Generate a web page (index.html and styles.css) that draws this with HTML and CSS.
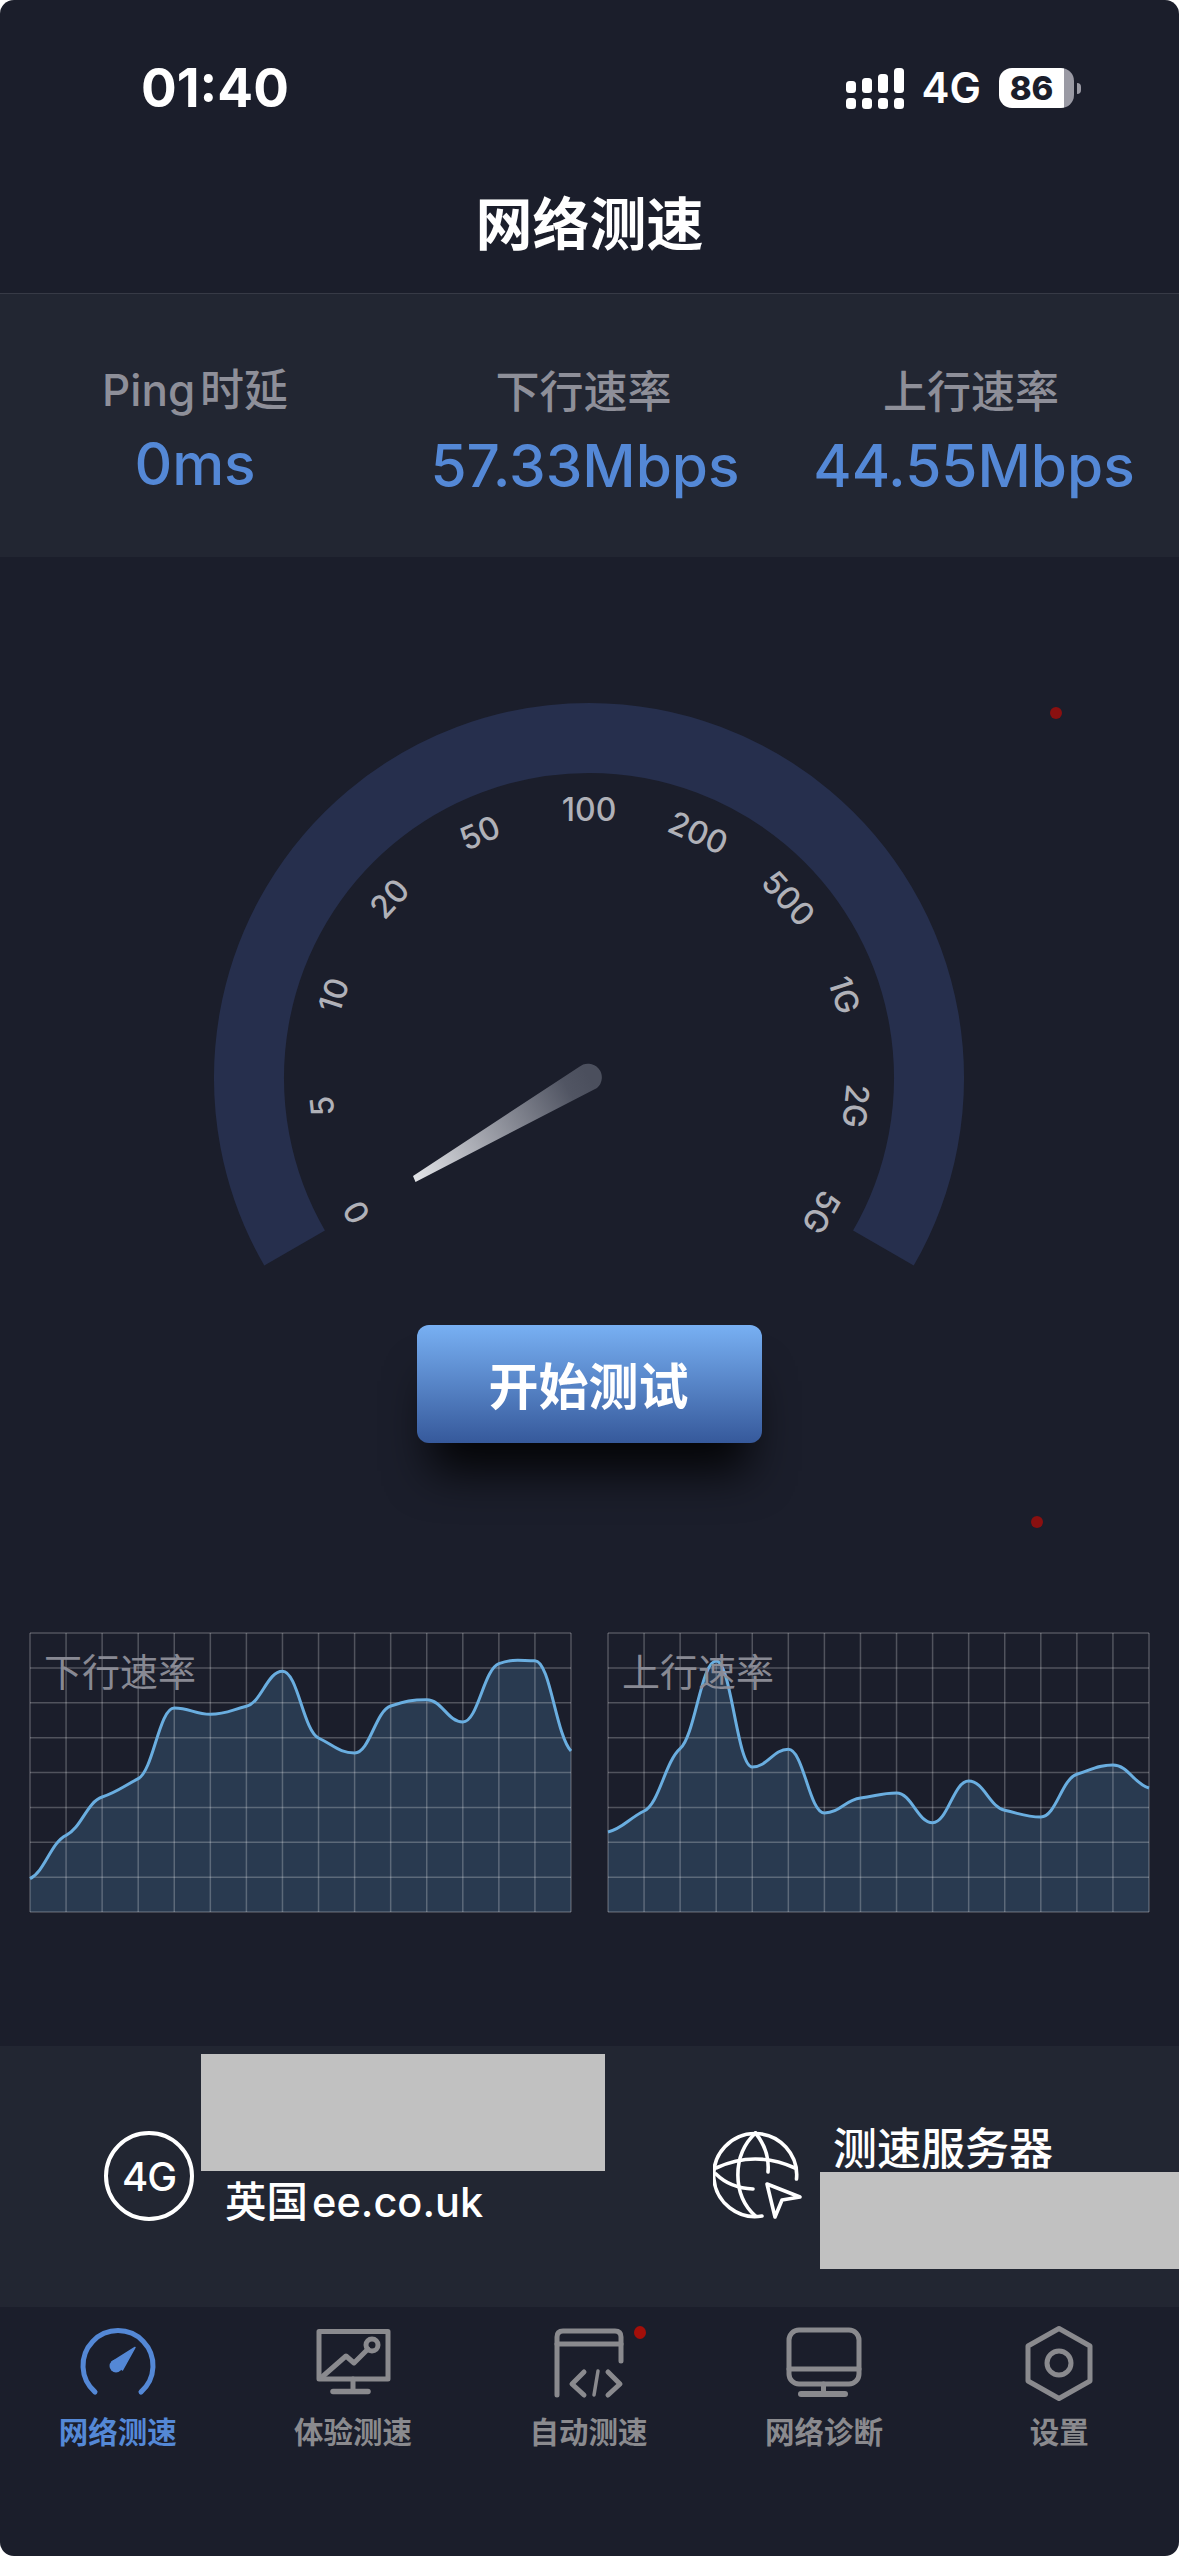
FILE: index.html
```html
<!DOCTYPE html>
<html lang="zh-CN">
<head>
<meta charset="utf-8">
<title>网络测速</title>
<link rel="stylesheet" href="styles.css">
</head>
<body>
<div class="screen">
  <header class="header">
    <div class="status">
      <span class="time">01:40</span>
      <div class="status-right">
        <svg class="signal" viewBox="0 0 58 41" width="58" height="41">
          <g fill="#fff">
            <rect x="0" y="13" width="10" height="12" rx="3.5"/><rect x="16" y="10" width="10" height="15" rx="3.5"/><rect x="32" y="6" width="10" height="19" rx="3.5"/><rect x="48" y="0" width="10" height="25" rx="3.5"/>
            <rect x="0" y="30" width="10" height="11" rx="3.5"/><rect x="16" y="30" width="10" height="11" rx="3.5"/><rect x="32" y="30" width="10" height="11" rx="3.5"/><rect x="48" y="30" width="10" height="11" rx="3.5"/>
          </g>
        </svg>
        <span class="net">4G</span>
        <div class="battery"><span>86</span></div>
        <div class="battery-cap"></div>
      </div>
    </div>
    <h1 class="title">网络测速</h1>
  </header>

  <section class="stats">
    <div class="stat stat-ping"><div class="stat-label">Ping 时延</div><div class="stat-value">0ms</div></div>
    <div class="stat stat-down"><div class="stat-label">下行速率</div><div class="stat-value">57.33Mbps</div></div>
    <div class="stat stat-up"><div class="stat-label">上行速率</div><div class="stat-value">44.55Mbps</div></div>
  </section>

  <main class="main">
    <span class="marker marker-a"></span>
    <span class="marker marker-b"></span>
    <svg class="gauge" viewBox="0 680 1179 600" width="1179" height="600">
      <defs>
        <linearGradient id="needle" gradientUnits="userSpaceOnUse" x1="589" y1="1077" x2="414" y2="1179">
          <stop offset="0" stop-color="#4b4f5d"/>
          <stop offset="0.12" stop-color="#515563"/>
          <stop offset="1" stop-color="#e3e4e8"/>
        </linearGradient>
      </defs>
      <path class="gauge-ring" d="M294.6 1248 A340 340 0 1 1 883.4 1248"/>
      <g class="gauge-labels">
        <text x="589" y="821" transform="rotate(-120 589 1078)">0</text>
        <text x="589" y="821" transform="rotate(-96 589 1078)">5</text>
        <text x="589" y="821" transform="rotate(-72 589 1078)">10</text>
        <text x="589" y="821" transform="rotate(-48 589 1078)">20</text>
        <text x="589" y="821" transform="rotate(-24 589 1078)">50</text>
        <text x="589" y="821">100</text>
        <text x="589" y="821" transform="rotate(24 589 1078)">200</text>
        <text x="589" y="821" transform="rotate(48 589 1078)">500</text>
        <text x="589" y="821" transform="rotate(72 589 1078)">1G</text>
        <text x="589" y="821" transform="rotate(96 589 1078)">2G</text>
        <text x="589" y="821" transform="rotate(120 589 1078)">5G</text>
      </g>
      <path fill="url(#needle)" d="M413 1176 L579 1067 A13 13 0 0 1 597 1088 L415.5 1182 Z"/>
    </svg>
    <button class="start" type="button">开始测试</button>
    <div class="charts">
      <div class="chart">
        <svg class="chart-svg" viewBox="0 0 541 279" data-points="805 675 560 505 293 312 288 183 383 428 287 268 335 160 151 422"></svg>
        <span class="chart-label">下行速率</span>
      </div>
      <div class="chart">
        <svg class="chart-svg" viewBox="0 0 541 279" data-points="665 602 415 152 470 417 608 563 548 637 512 600 620 492 464 533"></svg>
        <span class="chart-label">上行速率</span>
      </div>
    </div>
  </main>

  <section class="info">
    <div class="info-left">
      <svg class="info-icon" viewBox="0 0 90 90" width="90" height="90">
        <ellipse cx="45" cy="45" rx="43" ry="43" fill="none" stroke="#fff" stroke-width="4"/>
        <text class="badge-4g" x="45" y="60">4G</text>
      </svg>
      <div class="info-col-left">
        <div class="redact redact-a"></div>
        <div class="isp">英国 ee.co.uk</div>
      </div>
    </div>
    <div class="info-right">
      <svg class="info-icon" viewBox="713 2131 90 90" width="90" height="90">
        <g fill="none" stroke="#fff" stroke-width="3.6" stroke-linecap="round" stroke-linejoin="round">
          <path d="M796.5 2179 A41.5 41.5 0 1 0 762 2216"/>
          <path d="M716 2168 Q755 2150 795 2168"/>
          <path d="M716 2174 Q730 2188 753 2189"/>
          <path d="M755.5 2133 C732 2155 732 2195 755.5 2216"/>
          <path d="M755.5 2133 C766 2146 769 2160 768 2172"/>
          <path d="M767 2184 L800 2197 L782 2200 L775 2217 Z"/>
        </g>
      </svg>
      <div class="info-col-right">
        <div class="server">测速服务器</div>
        <div class="redact redact-b"></div>
      </div>
    </div>
  </section>

  <nav class="nav">
    <div class="nav-item nav-active">
      <svg class="nav-icon" viewBox="73 2324 90 80" width="90" height="80">
        <path d="M95 2392 A35 35 0 1 1 141 2392" fill="none" stroke="#5488d6" stroke-width="5" stroke-linecap="round"/>
        <path d="M112 2362 L135 2347.500 L122.500 2370 Z" fill="#5488d6" stroke="#5488d6" stroke-width="1.500" stroke-linejoin="round"/>
        <circle cx="116" cy="2366" r="6.500" fill="#5488d6"/>
      </svg>
      <span class="nav-label">网络测速</span>
    </div>
    <div class="nav-item">
      <svg class="nav-icon" viewBox="308 2324 90 80" width="90" height="80">
        <g fill="none" stroke="#8a8a8e" stroke-width="5" stroke-linejoin="round" stroke-linecap="round">
          <path d="M319 2379 V2331.500 H388 V2379 H319"/>
          <path d="M353 2379 V2391"/>
          <path d="M333 2391.500 H368" stroke-width="5.500"/>
          <path d="M322 2377 L346 2356 L354 2363 L368 2349"/>
          <circle cx="372" cy="2345" r="6"/>
        </g>
      </svg>
      <span class="nav-label">体验测速</span>
    </div>
    <div class="nav-item">
      <span class="badge"></span>
      <svg class="nav-icon" viewBox="544 2324 90 80" width="90" height="80">
        <g fill="none" stroke="#8a8a8e" stroke-width="5" stroke-linejoin="round" stroke-linecap="round">
          <path d="M557 2395 V2337 Q557 2331 563 2331 H615 Q621 2331 621 2337 V2361"/>
          <path d="M557 2344 H621"/>
          <path d="M584 2372 L572 2384 L584 2395"/>
          <path d="M598 2371 L594 2395" stroke-width="3.500"/>
          <path d="M608 2372 L620 2384 L608 2395"/>
        </g>
      </svg>
      <span class="nav-label">自动测速</span>
    </div>
    <div class="nav-item">
      <svg class="nav-icon" viewBox="779 2324 90 80" width="90" height="80">
        <g fill="none" stroke="#8a8a8e" stroke-width="5" stroke-linecap="round" stroke-linejoin="round">
          <rect x="789" y="2330" width="70" height="54" rx="10"/>
          <path d="M789 2369 H859"/>
          <path d="M823.500 2384 V2394"/>
          <path d="M801 2394 H845" stroke-width="6"/>
        </g>
      </svg>
      <span class="nav-label">网络诊断</span>
    </div>
    <div class="nav-item">
      <svg class="nav-icon" viewBox="1014 2324 90 80" width="90" height="80">
        <g fill="none" stroke="#8a8a8e" stroke-width="5" stroke-linejoin="round">
          <path d="M1059 2328.500 L1090 2346 V2381 L1059 2398.500 L1028 2381 V2346 Z"/>
          <circle cx="1059" cy="2363" r="12"/>
        </g>
      </svg>
      <span class="nav-label">设置</span>
    </div>
  </nav>
</div>
<script src="chart.js"></script>
</body>
</html>
```

FILE: styles.css
```css
* { box-sizing: border-box; }
html, body { margin: 0; padding: 0; background: #fff; }
body { font-family: Inter, "Noto Sans CJK SC", sans-serif; }
.screen {
  width: 1179px;
  height: 2556px;
  background: #1b1e2b;
  border-radius: 14px;
  overflow: hidden;
  display: flex;
  flex-direction: column;
  color: #fff;
}

/* header */
.header { height: 294px; border-bottom: 1px solid #373a46; flex: none; }
.status {
  display: flex;
  justify-content: space-between;
  align-items: center;
  height: 48px;
  margin-top: 64px;
  padding: 0 98px 0 141px;
}
.time { font-size: 53px; font-weight: 700; line-height: 48px; }
.status-right { display: flex; align-items: center; }
.signal { display: block; margin-right: 18px; }
.net { font-size: 42px; font-weight: 600; line-height: 48px; margin-right: 18px; }
.battery {
  width: 75px;
  height: 40px;
  border-radius: 13px;
  background: linear-gradient(90deg, #fff 87%, #9a9aa4 87%);
  color: #1b1e2b;
  font-size: 33px;
  font-weight: 800;
  line-height: 40px;
  padding-right: 10px;
  text-align: center;
}
.battery-cap {
  width: 4px;
  height: 11px;
  margin-left: 3px;
  background: #9a9aa4;
  border-radius: 0 6px 6px 0;
}
.title {
  margin: 83px 0 0;
  font-size: 57px;
  font-weight: 700;
  line-height: 60px;
  text-align: center;
}

/* stats */
.stats {
  flex: none;
  height: 263px;
  background: #222632;
  display: grid;
  grid-template-columns: repeat(3, 390px);
  padding-top: 73px;
}
.stat { text-align: center; }
.stat-ping { margin-top: -2px; }
.stat-label { font-size: 44px; font-weight: 500; line-height: 50px; color: #8e8f99; white-space: nowrap; }
.stat-ping .stat-label { word-spacing: -7px; }
.stat-down .stat-label { padding-right: 3px; }
.stat-up .stat-label { padding-right: 8px; }
.stat-value { font-size: 58.500px; font-weight: 500; line-height: 70px; margin-top: 14px; color: #5488d6; white-space: nowrap; }
.stat-up .stat-value { padding-right: 2px; }

/* main */
.main { flex: 1; position: relative; display: flex; flex-direction: column; align-items: center; }
.marker { position: absolute; border-radius: 50%; background: #8a1010; }
.marker-a { width: 12px; height: 12px; left: 1050px; top: 150px; }
.marker-b { width: 12px; height: 12px; left: 1031px; top: 959px; }
.gauge { display: block; margin-top: 123px; flex: none; }
.gauge-ring { fill: none; stroke: #262f4d; stroke-width: 70; }
.gauge-labels text { font-family: Inter, sans-serif; font-size: 32px; font-weight: 500; fill: #b0b1b8; text-anchor: middle; }
.start {
  flex: none;
  width: 345px;
  height: 118px;
  margin-top: 45px;
  padding: 0 2px 3px 0;
  border: 0;
  border-radius: 12px;
  background: linear-gradient(180deg, #78b0f3 0%, #36599b 100%);
  box-shadow: 0 42px 45px -14px rgba(0, 0, 0, 0.85);
  color: #fff;
  font-family: inherit;
  font-size: 50px;
  font-weight: 700;
}
.charts {
  flex: none;
  width: 100%;
  margin-top: 190px;
  padding: 0 30px;
  display: grid;
  grid-template-columns: 1fr 1fr;
  gap: 37px;
}
.chart { position: relative; height: 279px; }
.chart-svg { display: block; width: 541px; height: 279px; overflow: visible; }
.chart-label {
  position: absolute;
  left: 14px;
  top: 14px;
  font-size: 38px;
  line-height: 50px;
  color: #8e8f99;
  opacity: 0.95;
}
.area { fill: #293a50; }
.grid-line { stroke: rgba(255, 255, 255, 0.24); stroke-width: 1.500; }
.curve { fill: none; stroke: #6aaee0; stroke-width: 3; stroke-linejoin: round; }

/* info */
.info { flex: none; height: 261px; background: #222632; display: flex; }
.info-left { display: flex; width: 713px; padding-left: 104px; }
.info-right { display: flex; flex: 1; }
.info-icon { display: block; flex: none; margin-top: 85px; }
.info-col-left { margin-left: 7px; padding-top: 8px; }
.redact { background: #c1c1c1; }
.redact-a { width: 404px; height: 117px; }
.isp { margin: 4px 0 0 24px; font-size: 41.500px; font-weight: 500; word-spacing: -7px; line-height: 54px; white-space: nowrap; }
.info-col-right { flex: 1; margin-left: 17px; padding-top: 80px; }
.server { margin-left: 13px; font-size: 44px; font-weight: 500; line-height: 46px; white-space: nowrap; }
.redact-b { height: 97px; margin-right: 0; }
.badge-4g { font-family: Inter, sans-serif; font-size: 40px; font-weight: 500; fill: #fff; text-anchor: middle; letter-spacing: -1px; }

/* nav */
.nav { flex: none; height: 249px; display: flex; padding: 17px 2px 0 0; }
.nav-item { flex: 1; position: relative; display: flex; flex-direction: column; align-items: center; color: #8a8a8e; }
.nav-icon { display: block; }
.nav-label { margin-top: 8px; font-size: 29.500px; font-weight: 600; line-height: 40px; white-space: nowrap; }
.nav-active { color: #5488d6; }
.badge { position: absolute; left: 163px; top: 2px; width: 12px; height: 13px; border-radius: 50%; background: #a30f0a; }
```

FILE: chart.js
```js
// Draws each speed chart from its sampled points as a smooth curve with gentle tangents at every sample.
(function () {
  var NS = 'http://www.w3.org/2000/svg';
  var W = 541, H = 279, COLS = 15, ROWS = 8;
  var HANDLE = 0.42, SLOPE = 0.42;

  function add(svg, name, attrs) {
    var el = document.createElementNS(NS, name);
    Object.keys(attrs).forEach(function (k) { el.setAttribute(k, attrs[k]); });
    svg.appendChild(el);
  }

  function slopes(pts) {
    return pts.map(function (p, i) {
      var prev = pts[Math.max(i - 1, 0)], next = pts[Math.min(i + 1, pts.length - 1)];
      var before = p[1] - prev[1], after = next[1] - p[1];
      if (i > 0 && i < pts.length - 1 && before * after < 0) {
        return 0;
      }
      return SLOPE * (next[1] - prev[1]) / (next[0] - prev[0]);
    });
  }

  function curvePath(pts) {
    var m = slopes(pts);
    var out = ['M' + pts[0][0].toFixed(1) + ' ' + pts[0][1].toFixed(1)];
    for (var i = 1; i < pts.length; i++) {
      var a = pts[i - 1], b = pts[i], h = (b[0] - a[0]) * HANDLE;
      out.push('C' + (a[0] + h).toFixed(1) + ' ' + (a[1] + m[i - 1] * h).toFixed(1) + ' ' +
        (b[0] - h).toFixed(1) + ' ' + (b[1] - m[i] * h).toFixed(1) + ' ' +
        b[0].toFixed(1) + ' ' + b[1].toFixed(1));
    }
    return out.join(' ');
  }

  document.querySelectorAll('.chart-svg').forEach(function (svg) {
    var pts = svg.getAttribute('data-points').trim().split(/\s+/).map(function (v, i) {
      return [i * W / COLS, (Number(v) - 68) / 3];
    });
    var d = curvePath(pts);
    add(svg, 'path', { 'class': 'area', d: d + ' L' + W + ' ' + H + ' L0 ' + H + ' Z' });
    var i;
    for (i = 0; i <= COLS; i++) {
      var x = i * W / COLS;
      add(svg, 'line', { 'class': 'grid-line', x1: x, x2: x, y1: 0, y2: H });
    }
    for (i = 0; i <= ROWS; i++) {
      var y = i * H / ROWS;
      add(svg, 'line', { 'class': 'grid-line', x1: 0, x2: W, y1: y, y2: y });
    }
    add(svg, 'path', { 'class': 'curve', d: d });
  });
})();
```
